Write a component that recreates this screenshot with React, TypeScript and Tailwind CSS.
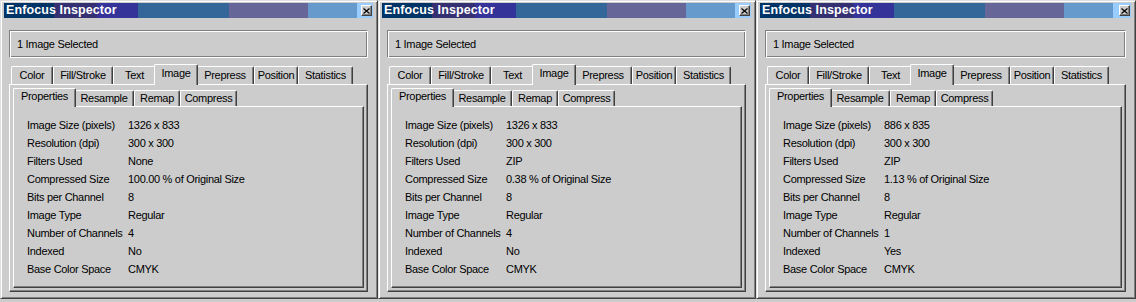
import React from "react";

// Values shown in the "Properties" tab of each inspector
const labels = [
  "Image Size (pixels)",
  "Resolution (dpi)",
  "Filters Used",
  "Compressed Size",
  "Bits per Channel",
  "Image Type",
  "Number of Channels",
  "Indexed",
  "Base Color Space",
];

const panels = [
  {
    w: "w-[378px]",
    values: ["1326 x 833", "300 x 300", "None", "100.00 % of Original Size", "8", "Regular", "4", "No", "CMYK"],
  },
  {
    w: "w-[378px]",
    values: ["1326 x 833", "300 x 300", "ZIP", "0.38 % of Original Size", "8", "Regular", "4", "No", "CMYK"],
  },
  {
    w: "w-[380px]",
    values: ["886 x 835", "300 x 300", "ZIP", "1.13 % of Original Size", "8", "Regular", "1", "Yes", "CMYK"],
  },
];

// widths are the nominal tab widths; the active one is 4px wider
const mainTabs = [
  { label: "Color", w: "w-[42px]" },
  { label: "Fill/Stroke", w: "w-[60px]" },
  { label: "Text", w: "w-[43px]" },
  { label: "Image", w: "w-[44px]", active: true },
  { label: "Prepress", w: "w-[58px]" },
  { label: "Position", w: "w-[44px]" },
  { label: "Statistics", w: "w-[55px]" },
];

const subTabs = [
  { label: "Properties", w: "w-[63px]", active: true },
  { label: "Resample", w: "w-[60px]" },
  { label: "Remap", w: "w-[46px]" },
  { label: "Compress", w: "w-[57px]" },
];

interface TabProps {
  label: string;
  w: string;
  active?: boolean;
  small?: boolean;
}

function Tab({ label, w, active, small }: TabProps) {
  if (active) {
    return (
      <div
        className={`${w} ${small ? "h-[19px]" : "h-[21px]"} relative z-10 -mx-[2px] -mb-px flex items-center justify-center pb-[3px] bg-[#cccccc] border-l border-t border-r border-white border-r-[#404040] rounded-t-[2px] shadow-[inset_-1px_0_0_#808080]`}
      >
        {label}
      </div>
    );
  }
  return (
    <div
      className={`${w} ${small ? "h-[16px]" : "h-[18px]"} flex items-center justify-center pb-px bg-[#cccccc] border-l border-t border-r border-white border-r-[#404040] rounded-t-[2px] shadow-[inset_-1px_0_0_#808080]`}
    >
      {label}
    </div>
  );
}

function Inspector({ w, values }: { w: string; values: string[] }) {
  return (
    <div
      className={`${w} h-[299px] shrink-0 bg-[#cccccc] border border-[#dfdfdf] border-r-[#404040] border-b-[#404040] shadow-[inset_1px_1px_0_#ffffff,inset_-1px_-1px_0_#808080] pl-[3px] pr-[4px] pt-[2px]`}
    >
      {/* title bar */}
      <div className="h-[15px] flex items-center justify-between bg-[linear-gradient(to_right,#003366_50px,#353072_50px,#353072_93px,#333399_93px,#333399_134px,#336699_134px,#336699_225px,#666699_225px,#666699_304px,#6699cc_304px,#6699cc_353px,#99ccff_353px)]">
        <span className="pl-[2px] text-[12.5px] font-bold tracking-[0.1px] text-white leading-none">
          Enfocus Inspector
        </span>
        <div className="mr-[1px] w-[11px] h-[11px] flex items-center justify-center bg-[#cccccc] border border-white border-r-[#404040] border-b-[#404040] shadow-[inset_-1px_-1px_0_#808080]">
          <svg width="7" height="6" viewBox="0 0 7 6">
            <path d="M0.5 0.5 L6.5 5.5 M6.5 0.5 L0.5 5.5" stroke="#000" strokeWidth="1.2" />
          </svg>
        </div>
      </div>

      <div className="mx-[5px]">
        <div className="mt-[12px] h-[28px] flex items-center pl-[7px] border border-[#808080] border-r-white border-b-white shadow-[inset_1px_1px_0_#ffffff,inset_-1px_-1px_0_#808080]">
          1 Image Selected
        </div>

        <div className="mt-[6px] h-[20px] flex items-end pl-[2px]">
          {mainTabs.map((t) => (
            <Tab key={t.label} {...t} />
          ))}
        </div>

        <div className="h-[208px] border border-white border-r-[#404040] border-b-[#404040] shadow-[inset_-1px_-1px_0_#808080] px-[3px] pt-[3px]">
          <div className="h-[18px] flex items-end pl-[2px]">
            {subTabs.map((t) => (
              <Tab key={t.label} {...t} small />
            ))}
          </div>
          <div className="h-[182px] border border-white border-r-[#404040] border-b-[#404040] shadow-[inset_-1px_-1px_0_#808080] pl-[13px] pt-[9px]">
            {labels.map((label, i) => (
              <div key={label} className="h-[18px] flex items-center whitespace-nowrap">
                <span className="min-w-[101px] pr-[3px]">{label}</span>
                <span>{values[i]}</span>
              </div>
            ))}
          </div>
        </div>
      </div>
    </div>
  );
}

export default function App() {
  return (
    <div className="w-[1136px] h-[302px] flex bg-[#cccccc] overflow-hidden font-['Liberation_Sans',Arial,sans-serif] text-[11px] tracking-[-0.3px] text-black">
      {panels.map((p, i) => (
        <Inspector key={i} w={p.w} values={p.values} />
      ))}
    </div>
  );
}
